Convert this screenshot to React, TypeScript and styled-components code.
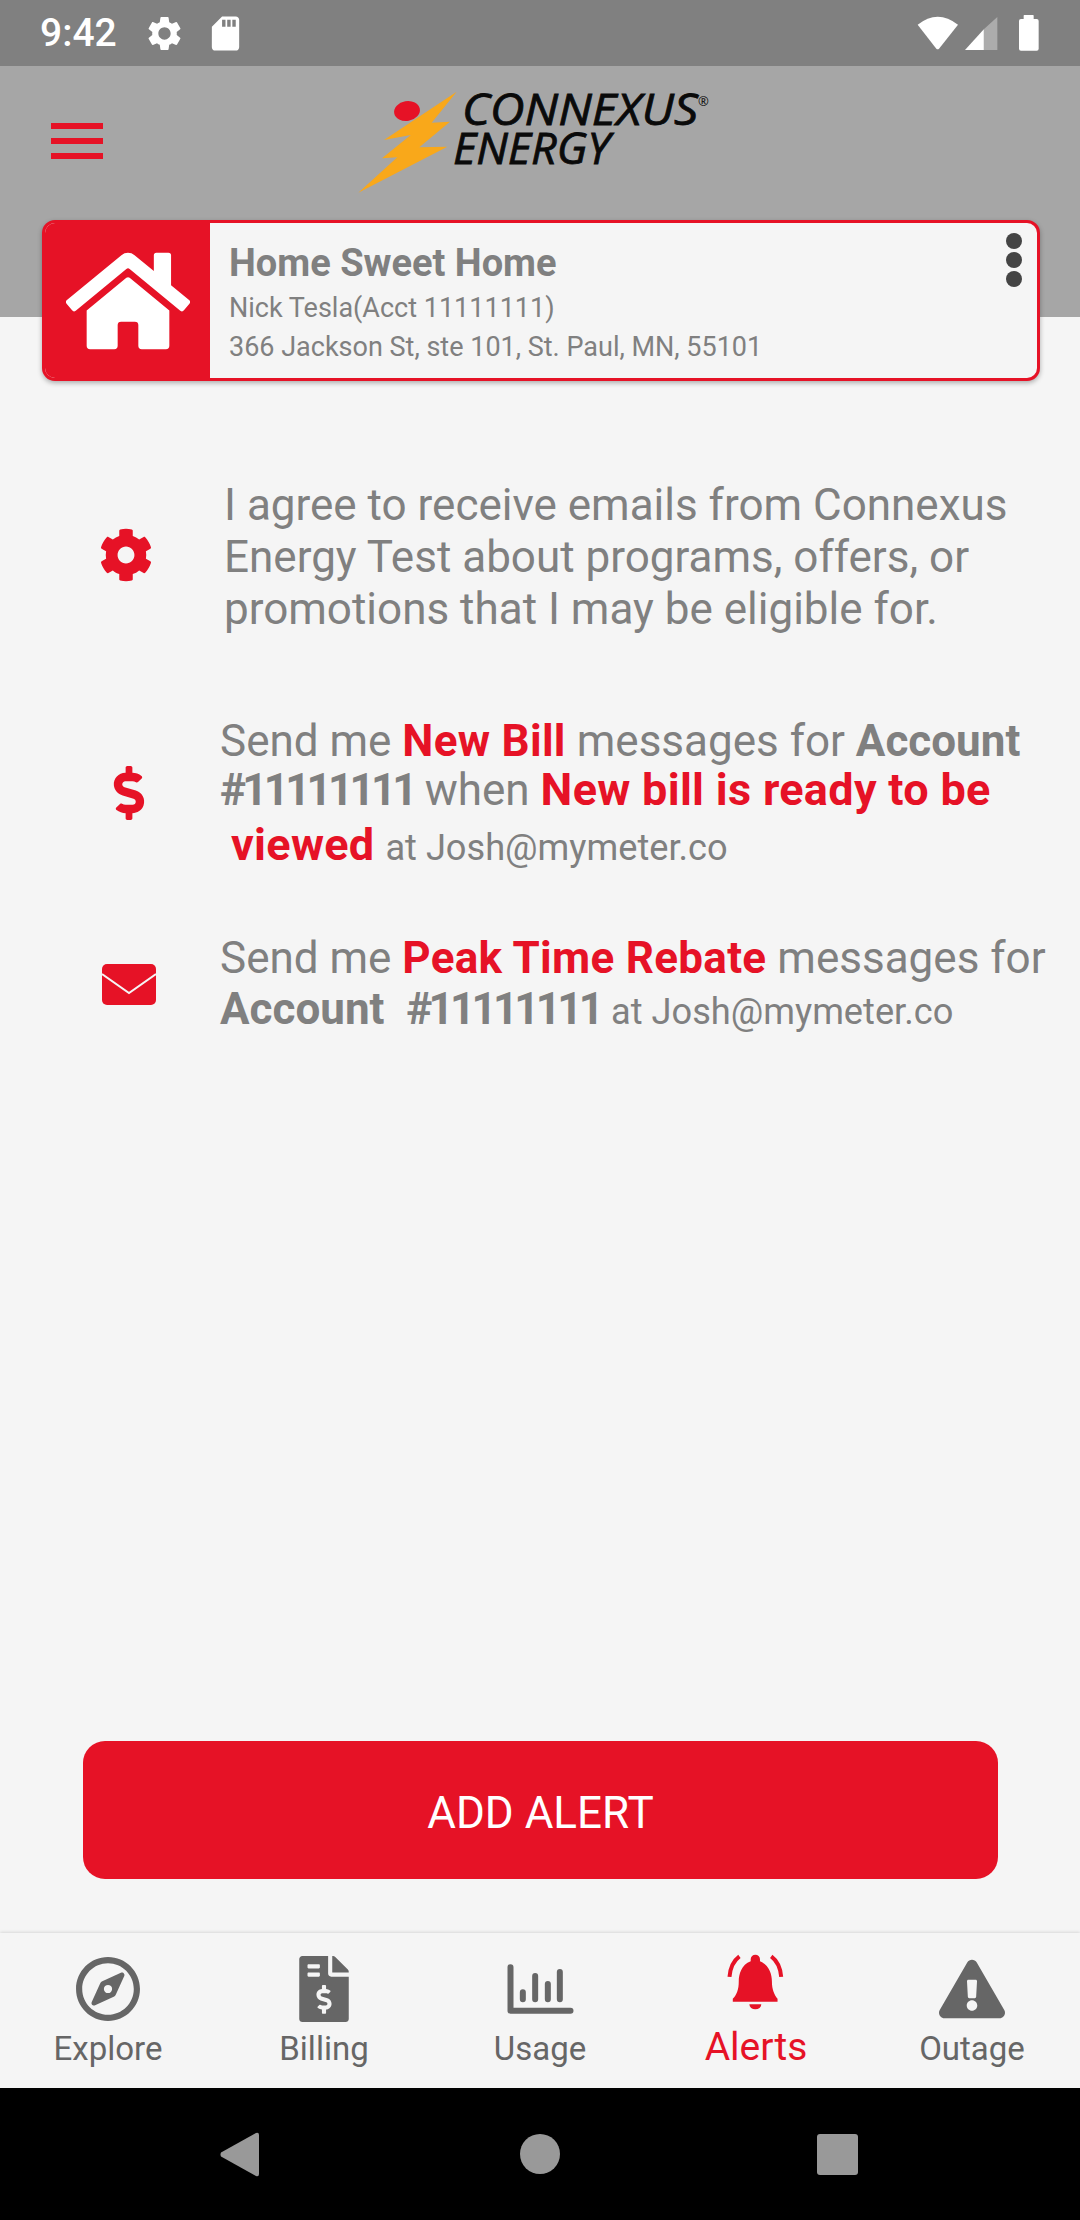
import React from "react";
import styled, { createGlobalStyle } from "styled-components";
import { FaCog, FaDollarSign, FaExclamationTriangle, FaFileInvoiceDollar, FaHome, FaRegCompass } from "react-icons/fa";
import { MdSdCard, MdSettings } from "react-icons/md";

const RED = "#e61226";
const GREY = "#808080";
const TAB_GREY = "#666666";

const GlobalStyle = createGlobalStyle`
  html, body {
    margin: 0;
    padding: 0;
    background: #f5f5f5;
    font-family: Roboto, "Liberation Sans", sans-serif;
  }
`;

const Screen = styled.div`
  width: 1080px;
  height: 2220px;
  display: flex;
  flex-direction: column;
  overflow: hidden;
  background: #f5f5f5;
`;

const StatusBar = styled.div`
  height: 66px;
  flex: none;
  display: flex;
  align-items: center;
  padding: 0 41px 0 40px;
  background: #808080;
  color: #fff;
`;

const Time = styled.span`
  width: 74px;
  font-size: 39px;
  font-weight: 500;
  line-height: 1;
  margin-right: 30px;
`;

const StatusLeftIcons = styled.div`
  display: flex;
  gap: 20px;
  align-items: center;
`;

const StatusRightIcons = styled.div`
  display: flex;
  align-items: center;
  margin-left: auto;
`;

const WifiIcon = styled.svg`
  margin-right: 6px;
`;

const SignalIcon = styled.svg`
  margin-right: 21px;
`;

const Header = styled.header`
  height: 251px;
  flex: none;
  display: flex;
  align-items: flex-start;
  background: #a6a6a6;
`;

const MenuButton = styled.div`
  display: flex;
  flex-direction: column;
  gap: 9px;
  margin: 57px 0 0 51px;
`;

const MenuBar = styled.span`
  width: 52px;
  height: 6px;
  background: ${RED};
`;

const Logo = styled.svg`
  margin: 9px 0 0 247px;
`;

const AccountCard = styled.section`
  position: relative;
  flex: none;
  box-sizing: border-box;
  width: 998px;
  height: 161px;
  margin: -97px 0 0 42px;
  display: flex;
  border: 3px solid ${RED};
  border-radius: 13px;
  background: #f5f5f5;
  box-shadow: 0 2px 5px rgba(0, 0, 0, 0.3);
  overflow: hidden;
`;

const CardHome = styled.div`
  width: 165px;
  flex: none;
  display: flex;
  align-items: center;
  justify-content: center;
  background: ${RED};
  color: #fff;
`;

const CardText = styled.div`
  padding: 20px 0 0 19px;
  color: ${GREY};
`;

const CardTitle = styled.div`
  font-size: 38px;
  font-weight: 700;
  line-height: 40px;
  margin-bottom: 6px;
`;

const CardLine = styled.div`
  font-size: 27px;
  line-height: 39px;
`;

const CardMenu = styled.div`
  position: absolute;
  top: 10px;
  right: 15px;
  display: flex;
  flex-direction: column;
  gap: 3px;
`;

const CardDot = styled.span`
  width: 16px;
  height: 16px;
  border-radius: 50%;
  background: #444444;
`;

const Body = styled.main`
  flex: 1;
  display: flex;
  flex-direction: column;
  min-height: 0;
`;

const AlertRow = styled.div<{ $inset: number; $gap: number; $top: number }>`
  display: flex;
  align-items: center;
  margin-top: ${(p) => p.$top}px;
  padding-left: ${(p) => p.$inset}px;
  gap: ${(p) => p.$gap}px;
`;

const RowIcon = styled.div<{ $lift?: number }>`
  width: 100px;
  flex: none;
  display: flex;
  justify-content: center;
  margin-bottom: ${(p) => p.$lift ?? 0}px;
  color: ${RED};
`;

const RowText = styled.div`
  color: ${GREY};
  font-size: 44px;
  white-space: pre;
`;

const TextLine = styled.div<{ $height: number; $indent?: number }>`
  height: ${(p) => p.$height}px;
  line-height: ${(p) => p.$height}px;
  padding-left: ${(p) => p.$indent ?? 0}px;
`;

const Strong = styled.span`
  font-weight: 700;
`;

const AccountNumber = styled(Strong)`
  letter-spacing: -3.8px;
`;

const Hot = styled.span`
  color: ${RED};
  font-weight: 700;
  letter-spacing: 0.3px;
`;

const HotLarge = styled(Hot)`
  font-size: 45px;
`;

const Small = styled.span`
  font-size: 36.2px;
`;

const AddButton = styled.button`
  height: 138px;
  margin: auto 82px 54px 83px;
  padding-top: 6px;
  flex: none;
  border: 0;
  border-radius: 22px;
  background: ${RED};
  color: #fff;
  font-family: inherit;
  font-size: 44px;
`;

const TabBar = styled.nav`
  height: 155px;
  flex: none;
  display: grid;
  grid-template-columns: repeat(5, 216px);
  box-shadow: 0 -1px 3px rgba(0, 0, 0, 0.12);
  background: #f5f5f5;
`;

const Tab = styled.div<{ $active?: boolean }>`
  display: flex;
  flex-direction: column;
  align-items: center;
  color: ${(p) => (p.$active ? RED : TAB_GREY)};
`;

const TabIcon = styled.div<{ $active?: boolean }>`
  height: 66px;
  margin-top: ${(p) => (p.$active ? 16 : 23)}px;
  display: flex;
  align-items: center;
  justify-content: center;
`;

const TabLabel = styled.span<{ $active?: boolean }>`
  font-size: ${(p) => (p.$active ? 39 : 33)}px;
  line-height: 40px;
  margin-top: ${(p) => (p.$active ? 12 : 7)}px;
`;

const NavBar = styled.div`
  height: 132px;
  flex: none;
  display: flex;
  align-items: center;
  padding-left: 220px;
  background: #000;
`;

const NavBack = styled.svg`
  margin-right: 261px;
`;

const NavHome = styled.span`
  width: 40px;
  height: 40px;
  border-radius: 50%;
  background: #999999;
  margin-right: 257px;
`;

const NavRecents = styled.span`
  width: 41px;
  height: 41px;
  border-radius: 3px;
  background: #999999;
`;

const tabs = ["Explore", "Billing", "Usage", "Alerts", "Outage"];

function TabGlyph({ name }: { name: string }) {
  switch (name) {
    case "Explore":
      return <FaRegCompass size={66} />;
    case "Billing":
      return <FaFileInvoiceDollar size={66} />;
    case "Usage":
      return (
        <svg width="67" height="50" viewBox="50 40 200 150" fill="none" stroke="currentColor" strokeLinecap="round" strokeLinejoin="round">
          <path d="M60 50V180H240" strokeWidth="18" />
          <path d="M97 125V146M134 76V146M172 100V146M208 64V146" strokeWidth="18" />
        </svg>
      );
    case "Alerts":
      return (
        <svg width="60" height="58" viewBox="140 40 180 175" fill="currentColor">
          <path d="M228 45a14 14 0 0 1 14 14v6C270 75 278 105 278 125C278 150 285 165 295 178v9H160v-9C172 165 178 150 178 125C178 105 186 75 214 65v-6a14 14 0 0 1 14-14z" />
          <path d="M210 195h36a18 15 0 0 1-36 0z" />
          <path d="M180 50C160 65 152 85 150 112M276 50C296 65 304 85 306 112" fill="none" stroke="currentColor" strokeWidth="12" />
        </svg>
      );
    default:
      return <FaExclamationTriangle size={66} />;
  }
}

export default function App() {
  return (
    <Screen>
      <GlobalStyle />
      <StatusBar>
        <Time>9:42</Time>
        <StatusLeftIcons>
          <MdSettings size={41} />
          <MdSdCard size={41} />
        </StatusLeftIcons>
        <StatusRightIcons>
          <WifiIcon width="42" height="34" viewBox="50 44 126 102" fill="#fff">
            <path d="M52 70Q112 22 173 70L116 142Q112 146 108 142Z" />
          </WifiIcon>
          <SignalIcon width="33" height="33" viewBox="195 50 100 100">
            <path d="M293 50V150H252V87Z" fill="#fff" fillOpacity="0.35" />
            <path d="M195 150L252 87V150Z" fill="#fff" />
          </SignalIcon>
          <svg width="20" height="36" viewBox="358 45 60 108" fill="#fff">
            <rect x="372" y="45" width="30" height="16" rx="2" />
            <rect x="358" y="57" width="59" height="95" rx="6" />
          </svg>
        </StatusRightIcons>
      </StatusBar>

      <Header>
        <MenuButton>
          <MenuBar />
          <MenuBar />
          <MenuBar />
        </MenuButton>
        <Logo width="370" height="125" viewBox="350 75 370 125">
          <polygon
            points="456.7,91.7 431.7,122.7 450,121.7 419.3,147.3 447.3,146.7 358.3,192.7 397.3,157.3 382,158.3 410.7,135 384,140"
            fill="#f9a81a"
          />
          <ellipse cx="407" cy="111" rx="13" ry="10" transform="rotate(-10 407 111)" fill={RED} />
          <text x="462" y="125" fontFamily="'Open Sans', sans-serif" fontStyle="italic" fontWeight="400" fontSize="44" textLength="236" lengthAdjust="spacingAndGlyphs" stroke="#0a0a0a" strokeWidth="0.8" fill="#0a0a0a">
            CONNEXUS
          </text>
          <text x="453" y="164" fontFamily="'Open Sans', sans-serif" fontStyle="italic" fontWeight="400" fontSize="44" textLength="157" lengthAdjust="spacingAndGlyphs" stroke="#0a0a0a" strokeWidth="0.8" fill="#0a0a0a">
            ENERGY
          </text>
          <text x="698" y="106" fontFamily="'Open Sans', sans-serif" fontSize="13" fill="#0a0a0a">
            ®
          </text>
        </Logo>
      </Header>

      <AccountCard>
        <CardHome>
          <FaHome size={124} />
        </CardHome>
        <CardText>
          <CardTitle>Home Sweet Home</CardTitle>
          <CardLine>Nick Tesla(Acct 11111111)</CardLine>
          <CardLine>366 Jackson St, ste 101, St. Paul, MN, 55101</CardLine>
        </CardText>
        <CardMenu>
          <CardDot />
          <CardDot />
          <CardDot />
        </CardMenu>
      </AccountCard>

      <Body>
        <AlertRow $top={98} $inset={76} $gap={48}>
          <RowIcon $lift={4}>
            <FaCog size={54} />
          </RowIcon>
          <RowText>
            <TextLine $height={52}>I agree to receive emails from Connexus</TextLine>
            <TextLine $height={52}>Energy Test about programs, offers, or</TextLine>
            <TextLine $height={52}>promotions that I may be eligible for.</TextLine>
          </RowText>
        </AlertRow>

        <AlertRow $top={82} $inset={79} $gap={41}>
          <RowIcon $lift={6}>
            <FaDollarSign size={54} />
          </RowIcon>
          <RowText>
            <TextLine $height={48}>
              Send me <Hot>New Bill</Hot> messages for <Strong>Account</Strong>
            </TextLine>
            <TextLine $height={50}>
              <AccountNumber>#11111111</AccountNumber> when <HotLarge>New bill is ready to be</HotLarge>
            </TextLine>
            <TextLine $height={60} $indent={11}>
              <HotLarge>viewed</HotLarge> <Small>at Josh@mymeter.co</Small>
            </TextLine>
          </RowText>
        </AlertRow>

        <AlertRow $top={58} $inset={79} $gap={41}>
          <RowIcon>
            <svg width="54" height="41" viewBox="0 0 54 41">
              <rect width="54" height="41" rx="5" fill={RED} />
              <path d="M0 10L27 29L54 10" fill="none" stroke="#f5f5f5" strokeWidth="2" />
            </svg>
          </RowIcon>
          <RowText>
            <TextLine $height={51}>
              Send me <Hot>Peak Time Rebate</Hot> messages for
            </TextLine>
            <TextLine $height={51}>
              <Strong>Account  </Strong>
              <AccountNumber>#11111111</AccountNumber> <Small>at Josh@mymeter.co</Small>
            </TextLine>
          </RowText>
        </AlertRow>

        <AddButton>ADD ALERT</AddButton>
      </Body>

      <TabBar>
        {tabs.map((name) => (
          <Tab key={name} $active={name === "Alerts"}>
            <TabIcon $active={name === "Alerts"}>
              <TabGlyph name={name} />
            </TabIcon>
            <TabLabel $active={name === "Alerts"}>{name}</TabLabel>
          </Tab>
        ))}
      </TabBar>

      <NavBar>
        <NavBack width="39" height="45" viewBox="0 0 39 45" fill="#999999">
          <path d="M36 1Q39 0 39 3V42Q39 45 36 44L1 24.5Q0 22.5 1 20.5Z" />
        </NavBack>
        <NavHome />
        <NavRecents />
      </NavBar>
    </Screen>
  );
}
